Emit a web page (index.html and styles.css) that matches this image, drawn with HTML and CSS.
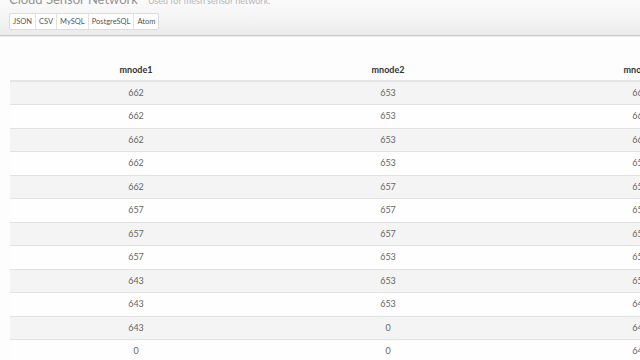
FILE: index.html
```html
<!DOCTYPE html>
<html>
<head>
<meta charset="utf-8">
<link rel="stylesheet" href="styles.css">
</head>
<body>
<header class="topbar">
  <div class="title-line"><span class="title">Cloud Sensor Network</span><span class="subtitle">Used for mesh sensor network.</span></div>
  <div class="formats">
    <a class="fmt">JSON</a><a class="fmt">CSV</a><a class="fmt">MySQL</a><a class="fmt">PostgreSQL</a><a class="fmt">Atom</a>
  </div>
</header>
<main class="content">
  <table class="data">
    <thead>
      <tr><th>mnode1</th><th>mnode2</th><th>mnode3</th></tr>
    </thead>
    <tbody>
      <tr><td>662</td><td>653</td><td>662</td></tr>
      <tr><td>662</td><td>653</td><td>662</td></tr>
      <tr><td>662</td><td>653</td><td>662</td></tr>
      <tr><td>662</td><td>653</td><td>657</td></tr>
      <tr><td>662</td><td>657</td><td>657</td></tr>
      <tr><td>657</td><td>657</td><td>657</td></tr>
      <tr><td>657</td><td>657</td><td>653</td></tr>
      <tr><td>657</td><td>653</td><td>653</td></tr>
      <tr><td>643</td><td>653</td><td>653</td></tr>
      <tr><td>643</td><td>653</td><td>643</td></tr>
      <tr><td>643</td><td>0</td><td>643</td></tr>
      <tr><td>0</td><td>0</td><td>643</td></tr>
    </tbody>
  </table>
</main>
</body>
</html>
```
FILE: styles.css
```css
html, body {
  margin: 0;
  padding: 0;
  overflow: hidden;
}
body {
  background: #fdfdfd;
  font-family: Lato, "Open Sans", "Liberation Sans", sans-serif;
  width: 640px;
  height: 360px;
}
.topbar {
  display: flow-root;
  background: linear-gradient(to bottom, #fbfbfd 0%, #f3f3f3 60%, #ebebeb 100%);
  border-bottom: 1px solid #c9c9c9;
  box-shadow: 0 1px 0 #ececec;
  padding: 0 9px 6px;
  height: 29px;
}
.title-line {
  margin-top: -12px;
  height: 20px;
  line-height: 20px;
  white-space: nowrap;
}
.title {
  font-size: 13px;
  color: #939393;
}
.subtitle {
  font-size: 9px;
  color: #b5b5b5;
  margin-left: 10px;
}
.formats {
  margin-top: 4px;
  display: inline-flex;
  background: #fff;
  border: 1px solid #dcdcdc;
  border-radius: 2px;
}
.fmt {
  font-size: 7.5px;
  line-height: 15px;
  padding: 0 3px;
  color: #555;
  border-left: 1px solid #e2e2e2;
}
.fmt:first-child {
  border-left: none;
}
.content {
  padding: 21px 0 0 10px;
}
.data {
  border-collapse: collapse;
  width: 756px;
  table-layout: fixed;
  font-size: 9px;
}
.data th {
  font-weight: 700;
  color: #333;
  text-align: center;
  padding: 7px 5px 3px;
  line-height: 12.5px;
  border-bottom: 2px solid #e4e4e4;
}
.data td {
  text-align: center;
  color: #666;
  padding: 5px;
  line-height: 12.5px;
  border-top: 1px solid #e2e2e2;
}
.data tbody tr:nth-child(odd) td {
  background: #f4f4f4;
}
.data tbody tr:nth-child(even) td {
  background: #fefefe;
}
```
